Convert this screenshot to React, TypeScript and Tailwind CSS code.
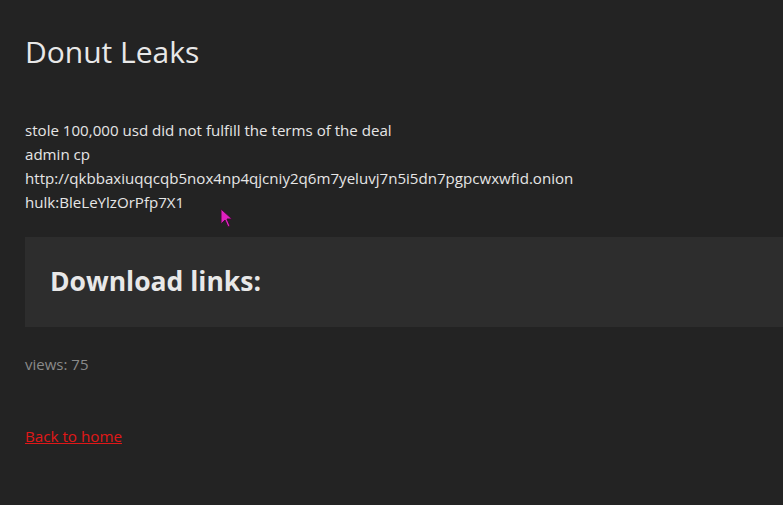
const App = () => {
  return (
    <div className="relative min-h-[505px] bg-[#232323] px-[25px] pt-[33px] text-[#e6e6e6]" style={{ fontFamily: '"Open Sans", "Noto Sans", sans-serif' }}>
      <h1 className="text-[30px] leading-[38px] font-normal text-[#e8e8e8]">Donut Leaks</h1>

      <div className="mt-[47px] text-[15.1px] leading-[24px] text-[#e6e6e6]">
        <div>stole 100,000 usd did not fulfill the terms of the deal</div>
        <div>admin cp</div>
        <div>http://qkbbaxiuqqcqb5nox4np4qjcniy2q6m7yeluvj7n5i5dn7pgpcwxwfid.onion</div>
        <div>hulk:BleLeYlzOrPfp7X1</div>
      </div>

      <div className="mt-[23px] -mr-[25px] flex h-[90px] items-center bg-[#2d2d2d] pl-[25px]">
        <h2 className="text-[26.5px] font-bold text-[#e8e8e8]">Download links:</h2>
      </div>

      <div className="mt-[26px] text-[15px] text-[#8a8a8a]">views: 75</div>

      <div className="mt-[49px] text-[15.2px]">
        <a href="#" className="text-[#e01818] underline">Back to home</a>
      </div>

      <svg className="absolute left-[220px] top-[208px]" width="14" height="20" viewBox="0 0 14 20">
        <path d="M1 1 L1 16 L5 12 L8 19 L10 18 L7 11 L12 11 Z" fill="#e020c0" stroke="#3a1030" strokeWidth="1" />
      </svg>
    </div>
  );
};

export default App;
